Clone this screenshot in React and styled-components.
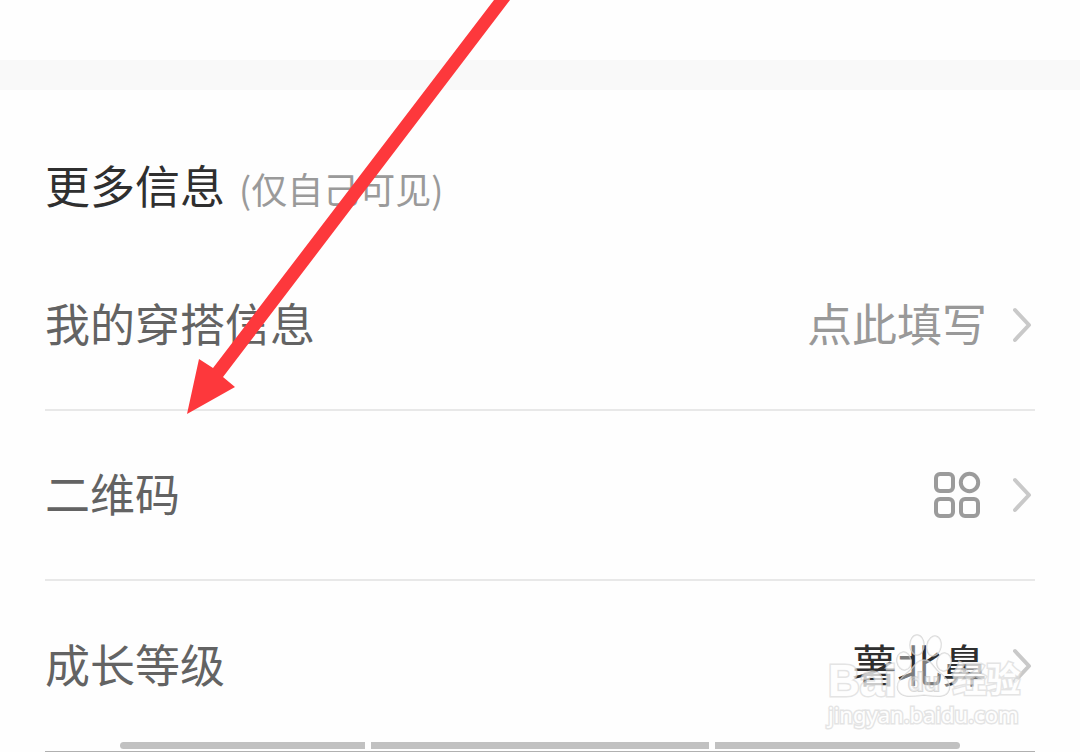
import React from 'react';
import styled, { createGlobalStyle } from 'styled-components';

const Global = createGlobalStyle`
  *, *::before, *::after { box-sizing: border-box; }
  body {
    margin: 0;
    background: #fefefe;
    font-family: "Noto Sans CJK SC", "Noto Sans", sans-serif;
    overflow-x: hidden;
  }
`;

const Page = styled.main`
  position: relative;
  overflow: hidden;
`;

const PreviousSection = styled.div`
  height: 60px;
`;

const SectionGap = styled.div`
  height: 30px;
  background: #f9f9f9;
`;

const Section = styled.section`
  padding: 63px 45px 0;
`;

const Header = styled.header`
  display: flex;
  align-items: baseline;
  gap: 14px;
  height: 88px;
  line-height: 64px;
`;

const Title = styled.h2`
  margin: 0;
  font-size: 45px;
  font-weight: 400;
  color: #2f2f2f;
`;

const Note = styled.span`
  font-size: 36px;
  color: #9a9a9a;
`;

const List = styled.ul`
  margin: 0;
  padding: 0;
  list-style: none;
`;

const Item = styled.li`
  height: 170px;
  border-bottom: 2px solid #e8e8e8;

  &:last-child {
    height: 171px;
    border-bottom: 1px solid #b0b0b0;
  }
`;

const Row = styled.button`
  display: flex;
  align-items: center;
  width: 100%;
  height: 100%;
  padding: 0;
  border: 0;
  background: none;
  font: inherit;
  font-size: 45px;
  line-height: 64px;
  text-align: left;
  cursor: pointer;
`;

const Label = styled.span`
  flex: 1;
  padding-bottom: 4px;
  color: #636363;
`;

const Value = styled.span`
  padding-bottom: 4px;
  margin-right: 26px;
  color: ${(p) => (p.$strong ? '#2f2f2f' : '#999999')};
`;

const IconValue = styled.span`
  display: flex;
  margin-right: 32px;
`;

const Chevron = () => (
  <svg width="22" height="36" viewBox="0 0 22 36" fill="none" stroke="#c9c9c9" strokeWidth="4" strokeLinecap="round" strokeLinejoin="round" aria-hidden="true">
    <path d="M2 3 L16 18 L2 33" />
  </svg>
);

const GridIcon = () => (
  <svg width="48" height="48" viewBox="0 0 48 48" fill="none" stroke="#9b9b9b" strokeWidth="4" aria-hidden="true">
    <rect x="3" y="3" width="17" height="17" rx="4" />
    <circle cx="36.5" cy="11.5" r="8.7" />
    <rect x="3" y="28" width="17" height="17" rx="4" />
    <rect x="28" y="28" width="17" height="17" rx="4" />
  </svg>
);

const Arrow = styled.svg`
  position: absolute;
  top: 0;
  left: 187px;
  pointer-events: none;
`;

const Watermark = styled.div`
  position: absolute;
  right: 58px;
  bottom: 22px;
  display: flex;
  flex-direction: column;
  width: 194px;
  color: #ffffff;
  opacity: 0.75;
  -webkit-text-stroke: 3px #dcdcdc;
  paint-order: stroke fill;
  pointer-events: none;
`;

const Brand = styled.div`
  display: flex;
  align-items: flex-end;
  height: 64px;
  font: 700 44px/34px "Liberation Sans", sans-serif;
`;

const BrandChinese = styled.span`
  font: 700 34px/40px "Noto Sans CJK SC", sans-serif;
`;

const Site = styled.div`
  font: 400 22px/32px "Noto Sans", sans-serif;
`;

const Paw = styled.svg`
  flex: none;
`;

const PawText = styled.text`
  font: 700 26px "Liberation Sans", sans-serif;
  -webkit-text-stroke: 0;
`;

const NavigationBar = styled.div`
  position: fixed;
  left: 0;
  right: 0;
  bottom: 3px;
  display: flex;
  gap: 6px;
  padding: 0 120px;
`;

const Segment = styled.span`
  flex: ${(p) => p.$grow} 1 0;
  height: 7px;
  background: #c1c1c1;

  &:first-child { border-radius: 4px 0 0 4px; }
  &:last-child { border-radius: 0 4px 4px 0; }
`;

export default function App() {
  return (
    <>
      <Global />
      <Page>
        <PreviousSection />
        <SectionGap />
        <Section>
          <Header>
            <Title>更多信息</Title>
            <Note>(仅自己可见)</Note>
          </Header>
          <List>
            <Item>
              <Row type="button">
                <Label>我的穿搭信息</Label>
                <Value>点此填写</Value>
                <Chevron />
              </Row>
            </Item>
            <Item>
              <Row type="button">
                <Label>二维码</Label>
                <IconValue><GridIcon /></IconValue>
                <Chevron />
              </Row>
            </Item>
            <Item>
              <Row type="button">
                <Label>成长等级</Label>
                <Value $strong>薯北鼻</Value>
                <Chevron />
              </Row>
            </Item>
          </List>
        </Section>
        <Arrow width="330" height="416" viewBox="0 0 330 416" aria-hidden="true">
          <path d="M0 414 L12 359 L26 368 L307 0 H323 L36 377 L48 387 Z" fill="#fd383c" />
        </Arrow>
        <Watermark>
          <Brand>
            <span>Bai</span>
            <Paw width="56" height="64" viewBox="0 0 56 64" fill="#fff" fillOpacity="0.5" stroke="#cccccc" strokeWidth="1.5">
              <ellipse cx="8" cy="27" rx="7" ry="9" transform="rotate(-10 8 27)" />
              <ellipse cx="21" cy="11" rx="7" ry="10" />
              <ellipse cx="38" cy="12" rx="7" ry="10" transform="rotate(12 38 12)" />
              <ellipse cx="48" cy="28" rx="7" ry="9" transform="rotate(10 48 28)" />
              <path d="M28 26 C20 26 18 34 11 39 C3 45 0 50 2 56 C6 65 18 62 28 61 C38 62 50 65 53 56 C55 50 52 45 44 39 C37 34 36 26 28 26 Z" />
              <PawText x="12" y="57" strokeWidth="2">du</PawText>
            </Paw>
            <BrandChinese>经验</BrandChinese>
          </Brand>
          <Site>jingyan.baidu.com</Site>
        </Watermark>
        <NavigationBar>
          <Segment $grow={245} />
          <Segment $grow={338} />
          <Segment $grow={245} />
        </NavigationBar>
      </Page>
    </>
  );
}
